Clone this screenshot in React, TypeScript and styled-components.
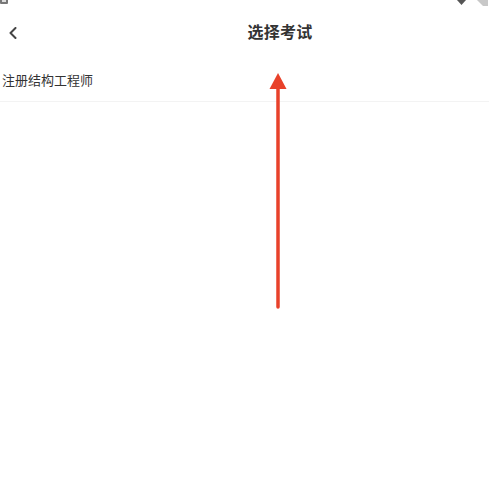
import React from 'react'
import styled, { createGlobalStyle } from 'styled-components'

const GlobalStyle = createGlobalStyle`
    html, body {
        margin: 0;
        padding: 0;
        background: #ffffff;
    }

    body {
        font-family: "Noto Sans CJK SC", "Noto Sans", sans-serif;
        color: #333333;
    }
`

const Page = styled.div`
    position: relative;
    width: 489px;
    height: 496px;
    overflow: hidden;
    background: #ffffff;
`

const StatusBar = styled.div`
    height: 6px;
    display: flex;
    align-items: flex-start;
    justify-content: space-between;
    overflow: hidden;
`

const StatusIcons = styled.div`
    display: flex;
    align-items: flex-start;
    gap: 11px;
    padding-right: 1px;
`

const Header = styled.header`
    height: 52px;
    display: flex;
    align-items: center;
`

const BackButton = styled.button`
    width: 26px;
    height: 40px;
    padding: 2px 0 0 9px;
    border: none;
    background: none;
    display: flex;
    align-items: center;
    color: #444444;
`

const Title = styled.h1`
    flex: 1;
    margin: 0 0 3px;
    padding-left: 45px;
    text-align: center;
    font-size: 16px;
    font-weight: 700;
    color: #333333;
    letter-spacing: 0.3px;
`

const List = styled.ul`
    margin: 0;
    padding: 0;
    list-style: none;
`

const Item = styled.li`
    height: 43px;
    padding-left: 2px;
    display: flex;
    align-items: center;
    font-size: 13px;
    color: #333333;
    border-bottom: 1px solid #f3f3f3;
`

const Pointer = styled.svg`
    position: absolute;
    left: 268px;
    top: 72px;
`

const App = () => {
    return (
        <Page>
            <GlobalStyle />
            <StatusBar>
                <svg width="9" height="5" viewBox="0 0 9 5">
                    <rect x="0" y="-2" width="8" height="6" rx="1" fill="#777" />
                    <rect x="2" y="0" width="4" height="2" fill="#ddd" />
                </svg>
                <StatusIcons>
                    <svg width="9" height="5" viewBox="0 0 9 5">
                        <path d="M0 0 H9 L4.5 5 Z" fill="#555" />
                    </svg>
                    <svg width="11" height="6" viewBox="0 0 11 6">
                        <path d="M0 0 H11 V6 H6 Z" fill="#c8c8c8" />
                    </svg>
                </StatusIcons>
            </StatusBar>
            <Header>
                <BackButton aria-label="返回">
                    <svg width="8" height="12" viewBox="0 0 8 12">
                        <path d="M6.5 1 L1.5 6 L6.5 11" fill="none" stroke="#444" strokeWidth="2" strokeLinecap="round" strokeLinejoin="round" />
                    </svg>
                </BackButton>
                <Title>选择考试</Title>
            </Header>
            <List>
                <Item>注册结构工程师</Item>
            </List>
            <Pointer width="20" height="238" viewBox="0 0 20 238">
                <path d="M10 1 L18.5 17 L1.5 17 Z" fill="#e8412a" />
                <line x1="10" y1="14" x2="10" y2="235" stroke="#e8412a" strokeWidth="3.5" strokeLinecap="round" />
            </Pointer>
        </Page>
    )
}

export default App
